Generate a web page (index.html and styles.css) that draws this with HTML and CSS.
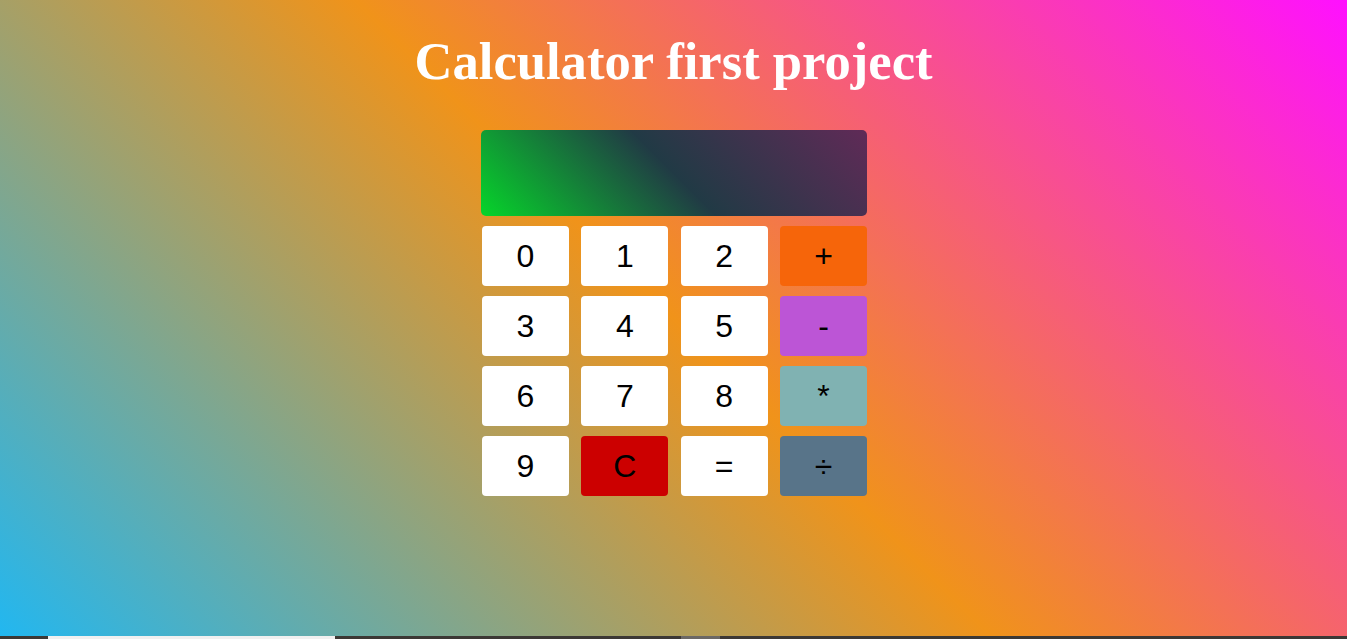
FILE: index.html
```html
<!DOCTYPE html>
<html lang="en">
<head>
<meta charset="utf-8">
<title>Calculator first project</title>
<link rel="stylesheet" href="styles.css">
</head>
<body>
<main class="page">
  <h1 class="title">Calculator first project</h1>
  <div class="calculator">
    <div class="display"></div>
    <div class="keys">
      <button class="key">0</button>
      <button class="key">1</button>
      <button class="key">2</button>
      <button class="key key-plus">+</button>
      <button class="key">3</button>
      <button class="key">4</button>
      <button class="key">5</button>
      <button class="key key-minus">-</button>
      <button class="key">6</button>
      <button class="key">7</button>
      <button class="key">8</button>
      <button class="key key-times">*</button>
      <button class="key">9</button>
      <button class="key key-clear">C</button>
      <button class="key">=</button>
      <button class="key key-divide">÷</button>
    </div>
  </div>
</main>
<footer class="bar">
  <span class="bar-dark bar-a"></span>
  <span class="bar-light"></span>
  <span class="bar-dark bar-b"></span>
  <span class="bar-gray"></span>
  <span class="bar-dark bar-c"></span>
</footer>
</body>
</html>
```

FILE: styles.css
```css
html, body {
  margin: 0;
  padding: 0;
  height: 100%;
}

body {
  display: flex;
  flex-direction: column;
  overflow: hidden;
  font-family: "Liberation Sans", Arial, sans-serif;
}

.page {
  flex: 1;
  display: flex;
  flex-direction: column;
  align-items: center;
  padding-top: 31px;
  background: linear-gradient(45deg, #22b7f0 0%, #f0931a 50%, #ff10ff 100%);
}

.title {
  margin: 0;
  font-family: "Liberation Serif", "Times New Roman", serif;
  font-weight: bold;
  font-size: 52.6px;
  line-height: 60px;
  color: #ffffff;
}

.calculator {
  width: 386px;
  margin-top: 39px;
  display: flex;
  flex-direction: column;
  gap: 10px;
}

.display {
  height: 86px;
  border-radius: 5px;
  background: linear-gradient(45deg, #06d52a 0%, #213a45 50%, #602a57 100%);
}

.keys {
  display: grid;
  grid-template-columns: repeat(4, 87px);
  grid-auto-rows: 60px;
  column-gap: 12.33px;
  row-gap: 10px;
  padding-left: 1.5px;
}

.key {
  border: none;
  margin: 0;
  padding: 0;
  border-radius: 4px;
  background: #ffffff;
  color: #000000;
  font-family: "Liberation Sans", Arial, sans-serif;
  font-size: 32px;
  cursor: pointer;
}

.key-plus { background: #f6650a; }
.key-minus { background: #bc55d6; }
.key-times { background: #80b2b2; }
.key-clear { background: #cc0000; }
.key-divide { background: #587489; }

.bar {
  height: 3px;
  display: flex;
  flex: none;
}

.bar-dark { background: #3c3835; }
.bar-a { width: 48px; }
.bar-light { width: 287px; background: #f0f0f0; }
.bar-b { width: 346px; }
.bar-gray { width: 39px; background: #6b6865; }
.bar-c { flex: 1; }
```
